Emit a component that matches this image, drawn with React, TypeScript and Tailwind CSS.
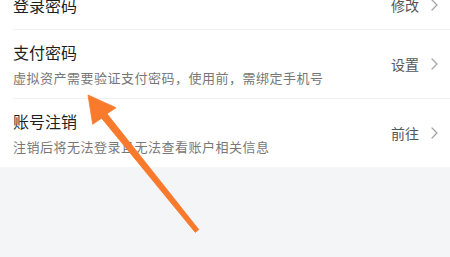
import React from 'react';

const FONT = { fontFamily: '"Noto Sans CJK SC", "Noto Sans", sans-serif' };

function Chevron() {
  return (
    <svg width="7" height="12" viewBox="0 0 7 12" className="shrink-0">
      <path d="M1 1 L6 6 L1 11" fill="none" stroke="#a3a3a3" strokeWidth="1.2" strokeLinecap="round" strokeLinejoin="round" />
    </svg>
  );
}

function SettingRow({ title, desc, action, last }: any) {
  const height = !desc ? 'h-[50px]' : last ? 'h-[68px]' : 'h-[69px]';
  return (
    <div className="bg-white pl-[13px]">
      <div className={`flex items-center pr-[12px] ${last ? '' : 'border-b border-[#f0f0f0]'} ${height}`}>
        <div className="flex-1 min-w-0">
          <div className="text-[16px] leading-[20px] text-[#1f1f1f]">{title}</div>
          {desc && (
            <div className="mt-[7px] text-[13px] leading-[18px] tracking-[0.5px] text-[#777777] whitespace-nowrap">{desc}</div>
          )}
        </div>
        <div className="flex items-center gap-[12px]">
          <span className="text-[14px] leading-[18px] text-[#555555]">{action}</span>
          <Chevron />
        </div>
      </div>
    </div>
  );
}

export default function App() {
  return (
    <div className="relative w-[450px] h-[257px] overflow-hidden bg-[#f4f5f7]" style={FONT}>
      <div className="-mt-[20px]">
        <SettingRow title="登录密码" action="修改" />
        <SettingRow title="支付密码" desc="虚拟资产需要验证支付密码，使用前，需绑定手机号" action="设置" />
        <SettingRow title="账号注销" desc="注销后将无法登录且无法查看账户相关信息" action="前往" last />
      </div>

      {/* annotation arrow */}
      <svg className="absolute inset-0 pointer-events-none" width="450" height="257" viewBox="0 0 450 257">
        <polygon
          points="88,95 116,107.7 107,113.8 198.75,229.6 195.25,232.4 101.6,118.2 92.7,124.3"
          fill="#f97a2d"
          stroke="#f97a2d"
          strokeWidth="0.8"
          strokeLinejoin="round"
        />
      </svg>
    </div>
  );
}
